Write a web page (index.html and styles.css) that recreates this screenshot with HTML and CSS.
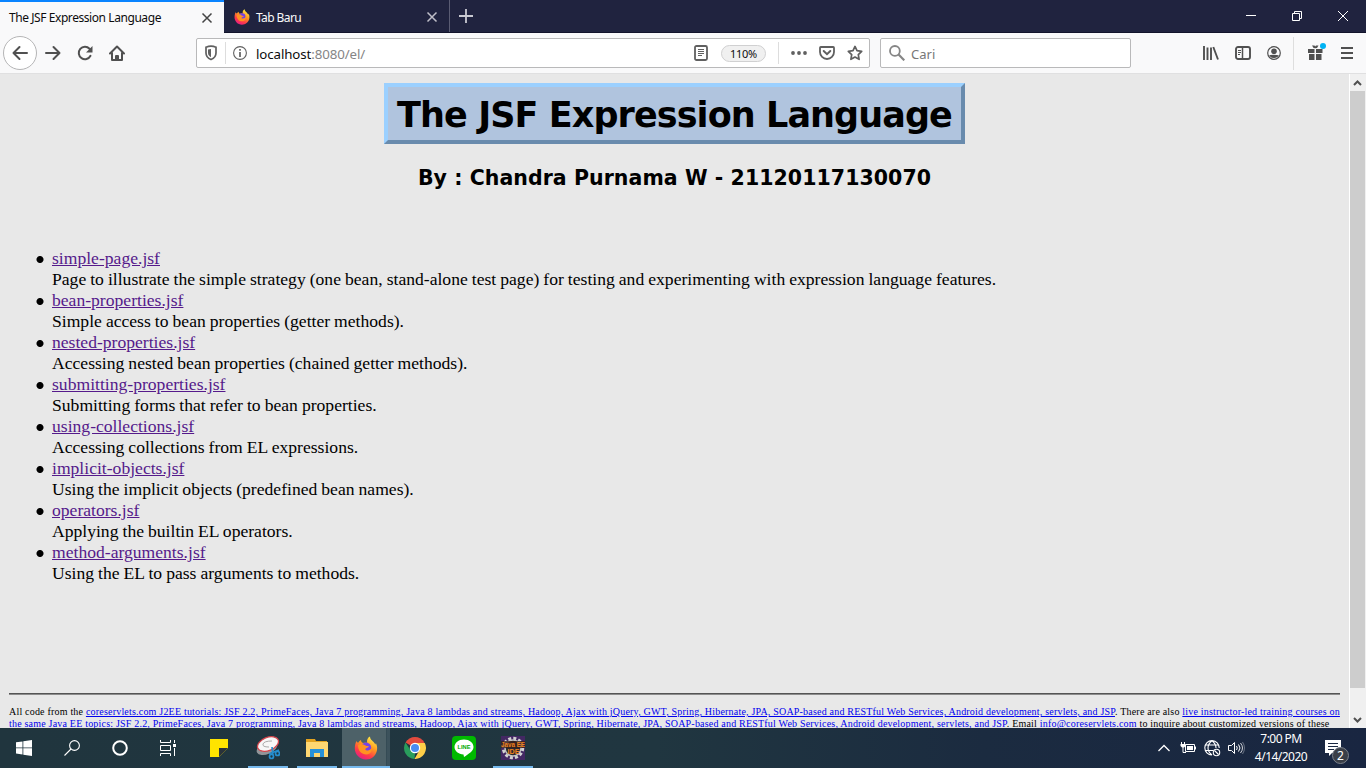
FILE: index.html
```html
<!DOCTYPE html>
<html lang="id">
<head>
<meta charset="utf-8">
<title>The JSF Expression Language</title>
<link rel="stylesheet" href="styles.css">
</head>
<body>
<svg width="0" height="0" class="defs">
  <defs>
    <linearGradient id="flame" x1=".8" y1="0" x2=".25" y2="1"><stop offset="0" stop-color="#fff44f"/><stop offset=".4" stop-color="#ff9a1f"/><stop offset=".72" stop-color="#ff3b48"/><stop offset="1" stop-color="#e4198b"/></linearGradient>
    <symbol id="firefox" viewBox="0 0 24 24">
      <path fill="url(#flame)" d="M2.500 5c.5 1 .9 1.500 1.600 1.800C5 5.500 6 4.500 7 4c0 1.500.7 2.500 2 3 1.500-.4 3-.5 4.200-.1C12.500 4.500 13.500 1.500 16 .5c0 3 2.500 4 4 6 .6.6 1 1.300 1.200 2l.8-1.200c1.200 2.600 1.500 5 .8 7.700C21.500 20 17.300 23.500 12 23.500 5.500 23.500.8 18.300.8 12.300.8 9.500 1.500 7 2.500 5z"/>
      <circle cx="12" cy="11.700" r="5.200" fill="#7542e5"/>
      <path fill="#ff9321" d="M4 9c3-2 5.500-1 7.500.6 1.200.8 3 .5 3.500 1-.4 1-2 1.200-3 1.600-1.200.8-.6 2.200 1.300 2.200 2.200 0 4-1.200 4.500-3.400 1 3.500-1.300 7.500-5.300 7.500C7.500 18.500 4 15 4 9z"/>
    </symbol>
  </defs>
</svg>

<header class="tabs">
  <div class="tab active"><span class="tab-title t1">The JSF Expression Language</span>
    <svg class="x" width="12" height="12" viewBox="0 0 12 12"><path d="M1.500 1.500l9 9m0-9l-9 9" stroke="#444" stroke-width="1.500"/></svg></div>
  <div class="tab"><svg class="fav" width="16" height="16"><use href="#firefox"/></svg><span class="tab-title t2">Tab Baru</span>
    <svg class="x" width="12" height="12" viewBox="0 0 12 12"><path d="M1.500 1.500l9 9m0-9l-9 9" stroke="#bfbfc9" stroke-width="1.500"/></svg></div>
  <div class="plus"><svg width="14" height="14" viewBox="0 0 14 14"><path d="M7 0v14M0 7h14" stroke="#c9c9d2" stroke-width="1.800"/></svg></div>
  <div class="window-buttons">
    <svg width="10" height="10" viewBox="0 0 10 10"><path d="M0 4.500h10" stroke="#fff"/></svg>
    <svg width="10" height="10" viewBox="0 0 10 10"><path d="M.5 2.500h7v7h-7zM2.500 2.500v-2h7v7h-2" stroke="#fff" fill="none"/></svg>
    <svg width="10" height="10" viewBox="0 0 10 10"><path d="M0 0l10 10m0-10L0 10" stroke="#fff"/></svg>
  </div>
</header>

<nav class="toolbar">
  <div class="back"><svg width="16" height="16" viewBox="0 0 16 16" class="stroke"><path d="M15 8H1.500M7.500 2l-6 6 6 6"/></svg></div>
  <div class="nav-icons">
    <svg width="16" height="16" viewBox="0 0 16 16" class="stroke"><path d="M1 8h13.500M8.500 2l6 6-6 6"/></svg>
    <svg width="16" height="16" viewBox="0 0 16 16" class="stroke"><path d="M13.500 10.800A6.200 6.200 0 1 1 12.500 3.700L14 5.500"/><path d="M15.500 1v6.500H9z" fill="#505050" stroke="none"/></svg>
    <svg width="16" height="16" viewBox="0 0 16 16" class="stroke"><path d="M1 8.500l7-7 7 7M3 8v7h10V8"/><path d="M7 15v-4h2v4" fill="#505050"/></svg>
  </div>
  <div class="urlbar">
    <svg class="shield" width="14" height="16" viewBox="0 0 14 16"><path d="M2 2.200C5 1 9 1 12 2.200V8c0 3.500-2.500 5.500-5 6.500C4.500 13.500 2 11.500 2 8z" fill="none" stroke="#606060" stroke-width="1.700"/><path d="M7 4c-1 0-2 .2-3 .5V8c0 2 1.500 3.500 3 4.300z" fill="#606060"/></svg>
    <span class="split"></span>
    <svg class="info" width="14" height="14" viewBox="0 0 14 14"><circle cx="7" cy="7" r="6.400" fill="none" stroke="#606060" stroke-width="1.100"/><path d="M7 3v1.700M7 6v5" stroke="#606060" stroke-width="1.700"/></svg>
    <span class="url">localhost<span class="dim">:8080/el/</span></span>
    <svg class="reader" width="14" height="16" viewBox="0 0 14 16"><rect x="1" y="1" width="12" height="14" rx="1.500" fill="none" stroke="#606060" stroke-width="1.800"/><path d="M4 4.500h6M4 6.500h6M4 8.500h6M4 10.500h4" stroke="#606060"/></svg>
    <span class="zoom">110%</span>
    <span class="divider"></span>
    <svg class="dots" width="16" height="4" viewBox="0 0 16 4" fill="#606060"><circle cx="2" cy="2" r="1.900"/><circle cx="8" cy="2" r="1.900"/><circle cx="14" cy="2" r="1.900"/></svg>
    <svg class="pocket" width="16" height="14" viewBox="0 0 16 14" fill="none" stroke="#606060"><path d="M1 1.800Q1 1 1.800 1h12.400q.8 0 .8.800V6a7 7 0 0 1-14 0z" stroke-width="1.800"/><path d="M4.700 5L8 8.200 11.300 5" stroke-width="2" stroke-linecap="round"/></svg>
    <svg width="16" height="16" viewBox="0 0 16 16"><path d="M8 1.400l2 4.300 4.700.6-3.400 3.300.8 4.700L8 12l-4.100 2.300.8-4.700L1.300 6.300 6 5.700z" fill="none" stroke="#606060" stroke-width="1.700" stroke-linejoin="round"/></svg>
  </div>
  <div class="search"><svg width="16" height="16" viewBox="0 0 16 16" fill="none" stroke="#858585"><circle cx="5.900" cy="5.900" r="4.900" stroke-width="1.800"/><path d="M9.300 9.300l6 6" stroke-width="2.200"/></svg><span>Cari</span></div>
  <div class="tools">
    <svg width="16" height="14" viewBox="0 0 16 14" stroke="#505050" stroke-width="1.900"><path d="M1 0v14M4.500 1.500V14M8 1.500V14M10.300 1l4.700 12.500"/></svg>
    <svg width="16" height="14" viewBox="0 0 16 14" stroke="#505050" fill="none"><rect x="1" y="1" width="14" height="12" rx="2" stroke-width="1.900"/><path d="M7.500 1v12" stroke-width="1.500"/><path d="M3 4.500h3M3 6.500h3M3 8.500h2"/></svg>
    <svg width="14" height="14" viewBox="0 0 14 14"><circle cx="7" cy="7" r="6.300" fill="none" stroke="#505050" stroke-width="1.200"/><circle cx="7" cy="5.200" r="2.800" fill="#505050"/><path d="M2.200 9.300Q7 8 11.800 9.300 10.500 12 7 12T2.200 9.300z" fill="#505050"/></svg>
  </div>
  <div class="extras">
    <svg width="18" height="19" viewBox="0 0 18 19"><path d="M0 7h6.500v4H0zM8 7h6.500v4H8zM1 12h5.500v6H1zM8 12h5.500v6H8zM4 3.500h2.500L7.200 4.500 8 3.500h2.500q-.8 2.700-3.200 2.700T4 3.500z" fill="#505050"/><circle cx="15" cy="4" r="3" fill="#00b3f4"/></svg>
    <svg width="12" height="12" viewBox="0 0 12 12"><path d="M0 1h12M0 6h12M0 11h12" stroke="#505050" stroke-width="2"/></svg>
  </div>
</nav>

<div class="viewport">
  <main class="page">
    <h1 class="banner">The JSF Expression Language</h1>
    <h2 class="byline">By : Chandra Purnama W - 21120117130070</h2>
    <ul class="examples">
      <li><a>simple-page.jsf</a><br>Page to illustrate the simple strategy (one bean, stand-alone test page) for testing and experimenting with expression language features.</li>
      <li><a>bean-properties.jsf</a><br>Simple access to bean properties (getter methods).</li>
      <li><a>nested-properties.jsf</a><br>Accessing nested bean properties (chained getter methods).</li>
      <li><a>submitting-properties.jsf</a><br>Submitting forms that refer to bean properties.</li>
      <li><a>using-collections.jsf</a><br>Accessing collections from EL expressions.</li>
      <li><a>implicit-objects.jsf</a><br>Using the implicit objects (predefined bean names).</li>
      <li><a>operators.jsf</a><br>Applying the builtin EL operators.</li>
      <li><a>method-arguments.jsf</a><br>Using the EL to pass arguments to methods.</li>
    </ul>
    <hr class="rule">
    <p class="credits">All code from the <a>coreservlets.com J2EE tutorials: JSF 2.2, PrimeFaces, Java 7 programming, Java 8 lambdas and streams, Hadoop, Ajax with jQuery, GWT, Spring, Hibernate, JPA, SOAP-based and RESTful Web Services, Android development, servlets, and JSP</a>. There are also <a>live instructor-led training courses on<br>
    the same Java EE topics: JSF 2.2, PrimeFaces, Java 7 programming, Java 8 lambdas and streams, Hadoop, Ajax with jQuery, GWT, Spring, Hibernate, JPA, SOAP-based and RESTful Web Services, Android development, servlets, and JSP</a>. Email <a>info@coreservlets.com</a> to inquire about customized versions of these</p>
  </main>
  <aside class="scrollbar">
    <svg width="17" height="17" viewBox="0 0 17 17"><path d="M4 11l3.500-3.500L11 11" fill="none" stroke="#505050" stroke-width="2"/></svg>
    <div class="thumb"></div>
    <svg width="17" height="17" viewBox="0 0 17 17"><path d="M4 7l3.500 3.500L11 7" fill="none" stroke="#505050" stroke-width="2"/></svg>
  </aside>
</div>

<footer class="taskbar">
  <div class="system">
    <span><svg width="16" height="16" viewBox="0 0 16 16" fill="#fff"><path d="M0 2.300L6.500 1.400v6.100H0zM7.300 1.300L16 0v7.500H7.300zM0 8.300h6.500v6.200L0 13.600zM7.300 8.300H16V16l-8.700-1.300z"/></svg></span>
    <span><svg width="16" height="16" viewBox="0 0 16 16" fill="none" stroke="#fff" stroke-width="1.100"><circle cx="10.500" cy="5.500" r="4.900"/><path d="M7 9L.5 15.500"/></svg></span>
    <span><svg width="16" height="16" viewBox="0 0 16 16"><circle cx="8" cy="8" r="6.800" fill="none" stroke="#fff" stroke-width="2"/></svg></span>
    <span><svg width="16" height="16" viewBox="0 0 16 16" fill="none" stroke="#fff"><path d="M.5 0v2.500h10V0M.5 5.500h10v5H.5zM.5 16v-2.500h10V16M14.500 0v3M14.500 8v8"/><path d="M13 4h3v3h-3z" fill="#fff" stroke="none"/></svg></span>
  </div>
  <div class="apps">
    <span class="app"><svg width="18" height="18" viewBox="0 0 18 18"><path d="M0 0h18v9L9 18H0z" fill="#ffe400"/><path d="M9 9h9l-9 9z" fill="#29323a"/></svg></span>
    <span class="app open"><svg width="24" height="24" viewBox="0 0 24 24"><ellipse cx="11" cy="12" rx="11" ry="6" fill="#929599" transform="rotate(-24 11 12)"/><ellipse cx="12" cy="8" rx="11" ry="6.500" fill="#f7f7f7" stroke="#d4454c" stroke-width="1.300" transform="rotate(-22 12 8)"/><path d="M16 5Q8 5 7 8t6 3" fill="none" stroke="#aaa"/><g fill="none" stroke="#258ed0" stroke-width="1.700"><path d="M16 11l1 8M23 14l-10 4"/><circle cx="15.500" cy="20.500" r="2"/><circle cx="21.500" cy="17.500" r="2"/></g></svg></span>
    <span class="app open"><svg width="22" height="18" viewBox="0 0 22 18"><path d="M0 0h9l1 2h11v15H0z" fill="#e4a320"/><path d="M0 3h22v15H0z" fill="#ffd772"/><path d="M4 18v-8h14v8h-4v-4H8v4z" fill="#2791d9"/></svg></span>
    <span class="app open current"><svg width="24" height="24"><use href="#firefox"/></svg></span>
    <span class="app"><svg width="22" height="22" viewBox="0 0 22 22"><path d="M11 11L1.500 5.500A11 11 0 0 1 20.500 5.500z" fill="#e24b3e"/><path d="M1.500 5.500L6.700 13.500 11 16 10.500 22A11 11 0 0 1 1.500 5.500z" fill="#299d5c"/><path d="M11 6h9.800A11 11 0 0 1 10.500 22l4.800-8.500z" fill="#ffcf48"/><circle cx="11" cy="11" r="5.200" fill="#fff"/><circle cx="11" cy="11" r="4" fill="#498df3"/></svg></span>
    <span class="app"><svg width="24" height="24" viewBox="0 0 24 24"><rect width="24" height="24" rx="4" fill="#00b900"/><path d="M12 3.500c5.500 0 9.500 3.300 9.500 7.500S16.500 18 12 21l-.5-2.500C6.500 18.200 2.500 15 2.500 11S6.500 3.500 12 3.500z" fill="#fff"/><text x="5.500" y="13" textLength="13" lengthAdjust="spacingAndGlyphs" class="line-word">LINE</text></svg></span>
    <span class="app open"><svg width="24" height="24" viewBox="0 0 24 24"><path fill="#432863" d="M0 0h24v24H0z"/><circle cx="12" cy="12" r="9.700" fill="none" stroke="#d2d2d2" stroke-width="3" stroke-dasharray="3 2.080"/><circle cx="12" cy="12" r="8" fill="#29282e" stroke="#c3c3c3" stroke-width="1.500"/><path d="M0 5h24v7H0z" fill="#3b211b" opacity=".8"/><text x="0" y="11" textLength="24" lengthAdjust="spacingAndGlyphs" class="ide-word">Java EE</text><text x="6.500" y="18" textLength="12" lengthAdjust="spacingAndGlyphs" class="ide-word">IDE</text></svg></span>
  </div>
  <div class="tray">
    <svg width="12" height="8" viewBox="0 0 12 8"><path d="M.5 7L6 1.500 11.500 7" fill="none" stroke="#fff" stroke-width="1.300"/></svg>
    <svg width="17" height="14" viewBox="0 0 17 14" fill="none" stroke="#fff"><path d="M5.500 3.500h9v7h-9zM15.500 5.500v3M1.500 1v2M4.500 1v2M3 6v5.500h3"/><path d="M.5 3h5v2L4 6.500H2L.5 5z" fill="#fff" stroke="none"/><path d="M7 5h6v4H7z" fill="#fff" stroke="none"/></svg>
    <svg width="17" height="17" viewBox="0 0 17 17" fill="none" stroke="#fff" stroke-width="1.100"><path d="M8 15A7.200 7.200 0 1 1 15.200 8M8 .8Q4 4 4 8t4 7M8 .8Q12 4 12 8M1.500 5h13M1 10.500h8"/><circle cx="12.500" cy="12.500" r="3.200"/><path d="M10.500 10.500l4 4"/></svg>
    <svg width="17" height="14" viewBox="0 0 17 14" fill="none" stroke="#fff"><path d="M.5 4.500h3l3-3v11l-3-3h-3zM8.500 5q1.500 2 0 4M10.500 3.500q3 3.500 0 7"/><path d="M12.500 2q4 5 0 10" opacity=".8"/><path d="M14.500 1q4 6 0 12" opacity=".35"/></svg>
    <div class="clock"><span>7:00 PM</span><span>4/14/2020</span></div>
    <svg class="notice" width="25" height="25" viewBox="0 0 25 25"><path d="M0 0h16v13H7l-3 3v-3H0z" fill="#fff"/><path d="M3 3.500h10M3 6.500h10M3 9.500h6" stroke="#1b2942"/><circle cx="15.500" cy="15.500" r="8" fill="#3a3f48" stroke="#7c828c"/><text x="15.500" y="20" text-anchor="middle" class="count">2</text></svg>
  </div>
</footer>
</body>
</html>
```
FILE: styles.css
```css
* { box-sizing: border-box; }
body { margin: 0; width: 1366px; height: 768px; overflow: hidden; display: flex; flex-direction: column; font-family: "Noto Sans", "Open Sans", sans-serif; }
.defs { position: absolute; }
svg { display: block; flex: none; }

/* Tab strip */
.tabs { flex: none; height: 33px; display: flex; background: #20233f; border-bottom: 1px solid #12142b; }
.tab { width: 226px; height: 32px; display: flex; align-items: center; padding: 2px 11px 0 10px; color: #fafafa; border-right: 1px solid #5a5c73; font-size: 12px; white-space: nowrap; }
.tab.active { width: 224px; height: 33px; background: #f9f9fa; color: #0c0c0d; border-top: 2px solid #0a84ff; border-right: 0; padding: 0 11px 0 9px; }
.tab .x { margin-left: auto; }
.tab .fav { margin-right: 6px; }
.t1 { letter-spacing: -.43px; }
.t2 { letter-spacing: -.6px; }
.plus { padding: 9px 0 0 9px; }
.window-buttons { margin-left: auto; display: flex; gap: 36px; padding: 11px 18px 0 0; }

/* Navigation toolbar */
.toolbar { flex: none; height: 41px; display: flex; align-items: center; padding-left: 3px; background: #f9f9fa; border-bottom: 1px solid #e0e0e1; }
.stroke { fill: none; stroke: #505050; stroke-width: 2; stroke-linecap: round; stroke-linejoin: round; }
.back { width: 34px; height: 34px; border: 1px solid #b5b5b6; border-radius: 50%; background: #fff; display: grid; place-items: center; }
.nav-icons { display: flex; gap: 16px; margin-left: 8px; }
.urlbar { width: 674px; height: 30px; margin-left: 71px; border: 1px solid #b9b9ba; border-radius: 2px; background: #fff; display: flex; align-items: center; padding: 0 6px 0 7px; }
.split { width: 1px; height: 22px; margin: 0 7px; background: #ddd; }
.url { margin-left: 9px; width: 438px; padding-top: 2px; font-size: 13.3px; color: #0c0c0d; white-space: nowrap; letter-spacing: -.1px; }
.dim { color: #858585; }
.zoom { margin-left: 13px; width: 45px; height: 17px; border: 1px solid #d0d0d1; border-radius: 9px; background: #f0f0f0; font-size: 11px; line-height: 16px; text-align: center; color: #0c0c0d; letter-spacing: -.3px; }
.divider { width: 1px; height: 22px; margin: 0 12px; background: #ddd; }
.pocket { margin: 0 12px; }
.search { width: 251px; height: 30px; margin-left: 10px; border: 1px solid #b9b9ba; border-radius: 2px; background: #fff; display: flex; align-items: center; gap: 6px; padding-left: 8px; font-size: 13px; color: #777; }
.search span { padding-top: 2px; }
.tools { margin-left: auto; display: flex; gap: 16px; align-items: center; }
.extras { display: flex; align-items: center; gap: 15px; height: 33px; margin-left: 12px; padding: 0 13px 0 14px; border-left: 1px solid #dedede; }
.extras svg:first-child { margin-top: -3px; }

/* Document */
.viewport { height: 654px; flex: none; display: flex; overflow: hidden; }
.page { width: 1349px; padding: 9px 9px 0; background: #e8e8e8; overflow: hidden; font: 17.6px/21px "Liberation Serif", serif; color: #000; }
.banner { width: 581px; height: 61px; margin: 0 auto; background: #b0c4de; border: 4px solid; border-color: #9bd0ff #698bad #698bad #9bd0ff; text-align: center; white-space: nowrap; font: bold 35px/57px "DejaVu Sans", sans-serif; letter-spacing: -.92px; }
.byline { margin: 20px 0 56px; text-align: center; font: bold 20.5px/28px "DejaVu Sans", sans-serif; letter-spacing: .06px; }
.examples { margin: 0; padding-left: 27px; list-style: none; word-spacing: -.37px; }
.examples li { padding-left: 16px; background: radial-gradient(circle at 4px 11.500px, #000 3px, transparent 4px) no-repeat; }
.examples a { color: #551a8b; text-decoration: underline; }
.rule { height: 2px; margin: 109px 0 11px; border: 0; border-top: 1px solid #545454; border-bottom: 1px solid #8c8c8c; }
.credits { margin: 0; font-size: 10px; line-height: 12px; white-space: nowrap; letter-spacing: .2px; }
.credits a { color: #00e; text-decoration: underline; }
.scrollbar { width: 17px; background: #f0f0f0; display: flex; flex-direction: column; border-left: 1px solid #fff; }
.scrollbar svg:last-child { margin-top: auto; }
.thumb { height: 597px; margin-right: 1px; background: #cdcdcd; }

/* Taskbar */
.taskbar { flex: none; height: 40px; display: flex; background: linear-gradient(90deg, #20353e 0, #203640 48%, #1b2b40 72%, #192641 100%); color: #fff; }
.system { display: flex; margin-right: 2px; }
.system span { width: 48px; height: 40px; display: grid; place-items: center; }
.apps { display: flex; }
.app { width: 49px; height: 40px; display: grid; place-items: center; }
.app.open { background: linear-gradient(#76b9ed, #76b9ed) 5px 38px / 40px 2px no-repeat; }
.app.current { background: linear-gradient(#76b9ed, #76b9ed) 1px 38px / 48px 2px no-repeat, linear-gradient(90deg, transparent 1px, #4d6168 1px, #4d6168 45px, #2d444e 45px, #3c525c 46px); }
.line-word { font: bold 5.5px "Liberation Sans", sans-serif; fill: #00a800; }
.ide-word { font: bold 8px "Liberation Sans", sans-serif; fill: #ef831f; }
.tray { margin-left: auto; display: flex; align-items: center; padding-right: 16px; }
.tray > svg:nth-child(2) { margin-left: 10px; }
.tray > svg:nth-child(3) { margin-left: 7px; }
.tray > svg:nth-child(4) { margin-left: 7px; }
.clock { width: 54px; margin: 0 17px 0 9px; display: flex; flex-direction: column; align-items: center; font-size: 12px; line-height: 18px; white-space: nowrap; letter-spacing: -.52px; }
.notice { margin-top: 9px; }
.count { font: 12px "Noto Sans", sans-serif; fill: #fff; }
```
